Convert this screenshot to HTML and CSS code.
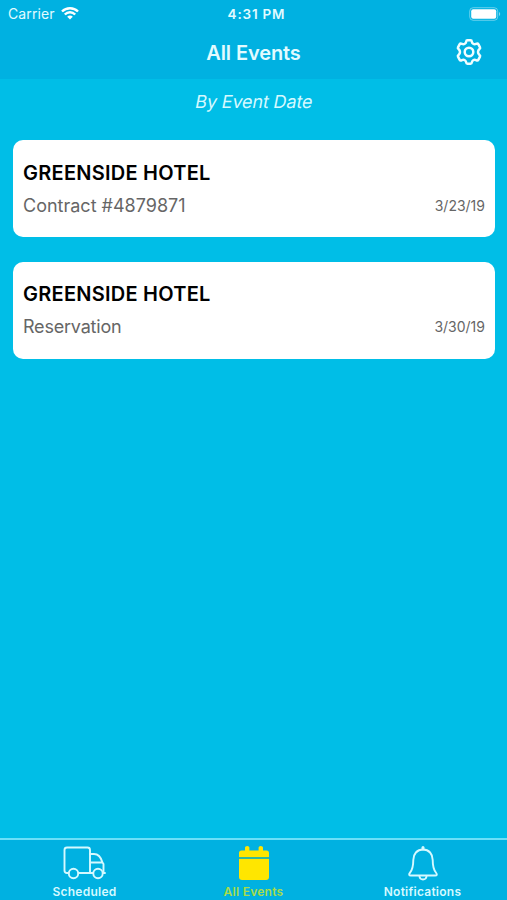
FILE: index.html
```
<!DOCTYPE html>
<html lang="en">

<head>
    <meta charset="UTF-8">
    <meta name="viewport" content="width=device-width, initial-scale=1.0">
    <title>All Events</title>
    <link rel="stylesheet" href="styles.css">
</head>

<body>
    <div class="app">
        <header class="header">
            <div class="status-bar">
                <div class="carrier">
                    <span>Carrier</span>
                    <svg width="18" height="14" viewBox="0 0 18 14" fill="none" stroke="currentColor" stroke-width="2.4">
                        <path d="M1 4.500C5.400.1 12.600.1 17 4.500" />
                        <path d="M3.800 7.500c3-3 7.400-3 10.400 0" />
                        <path d="M6.200 9.700c1.600-1.600 4-1.600 5.600 0L9 12.500z" fill="currentColor" stroke="none" />
                    </svg>
                </div>
                <div class="time">4:31 PM</div>
                <div class="battery">
                    <svg width="32" height="14" viewBox="0 0 32 14">
                        <rect x=".7" y=".7" width="28" height="12.6" rx="3.5" fill="none" stroke="#fff" stroke-opacity=".4" />
                        <rect x="2.2" y="2.2" width="25" height="9.6" rx="2" fill="#fff" />
                        <path d="M30 5c1.6.6 1.6 3.4 0 4z" fill="#fff" fill-opacity=".5" />
                    </svg>
                </div>
            </div>
            <div class="nav-bar">
                <h1>All Events</h1>
                <button class="settings" aria-label="Settings">
                    <svg width="28" height="28" viewBox="-14 -14 28 28" fill="none" stroke="currentColor" stroke-width="2.5" stroke-linejoin="round">
                        <path d="M-1.600-11.800H1.600Q2.700-11.800 2.800-10.500 2.900-9 4.200-8.200T7-8.100Q8.700-8.900 9.300-7.900L11-4.700Q11.500-3.700 10.500-2.900 9-1.700 9 0T10.500 2.900Q11.500 3.700 11 4.700L9.300 7.900Q8.700 8.900 7 8.100 5.500 7.400 4.200 8.200T2.800 10.500Q2.700 11.800 1.600 11.800H-1.600Q-2.700 11.800-2.800 10.500-2.900 9-4.200 8.200T-7 8.100Q-8.700 8.900-9.300 7.900L-11 4.700Q-11.500 3.700-10.500 2.900-9 1.700-9 0T-10.500-2.900Q-11.500-3.700-11-4.700L-9.300-7.900Q-8.700-8.900-7-8.100-5.500-7.400-4.200-8.200T-2.800-10.500Q-2.700-11.800-1.600-11.800z" />
                        <circle r="4.300" />
                    </svg>
                </button>
            </div>
        </header>

        <main class="content">
            <p class="sort-label">By Event Date</p>

            <div class="event">
                <h2>GREENSIDE HOTEL</h2>
                <div class="event-info">
                    <span class="contract">Contract #4879871</span>
                    <span class="date">3/23/19</span>
                </div>
            </div>

            <div class="event">
                <h2>GREENSIDE HOTEL</h2>
                <div class="event-info">
                    <span class="reservation">Reservation</span>
                    <span class="date">3/30/19</span>
                </div>
            </div>
        </main>

        <nav class="tab-bar">
            <a class="tab">
                <svg width="44" height="36" viewBox="0 0 44 36" fill="none" stroke="currentColor" stroke-width="1.9" stroke-linejoin="round" stroke-linecap="round">
                    <path d="M5.500 28H4Q1.500 28 1.500 25.500V5Q1.500 2.500 4 2.500H24.500Q27 2.500 27 5V28H15.500" />
                    <path d="M27 9h4c4.500 0 7.200 4 8.500 8.500L40.500 19v9h1.500M27 28h3M28 17.500h11" />
                    <circle cx="10.500" cy="28.500" r="4.700" />
                    <circle cx="35" cy="28.500" r="4.700" />
                </svg>
                <span class="scheduled">Scheduled</span>
            </a>
            <a class="tab active">
                <svg width="44" height="36" viewBox="0 0 44 36" fill="currentColor">
                    <path d="M7 12V8q0-2.500 2.500-2.500H13V2.500q0-1.500 2.200-1.500t2.200 1.500v3h9.200v-3q0-1.500 2.200-1.500t2.200 1.500v3h3.500Q37 5.500 37 8v4z" />
                    <path d="M7 14h30v18q0 3-3 3H10q-3 0-3-3z" />
                    <path d="M7 12h30v2H7z" fill="#32b99b" />
                </svg>
                <span class="all-events">All Events</span>
            </a>
            <a class="tab">
                <svg width="44" height="36" viewBox="0 0 44 36" fill="none" stroke="currentColor" stroke-width="1.9" stroke-linejoin="round" stroke-linecap="round">
                    <path d="M22 4.500c-6 0-9.700 4.500-9.700 10.500 0 8-1.300 10.500-3.500 13-1.200 1.400-.7 2.500 1 2.500h24.400c1.700 0 2.200-1.100 1-2.500-2.200-2.500-3.500-5-3.500-13 0-6-3.700-10.500-9.700-10.500z" />
                    <path d="M22 2.500v1.500" stroke-width="3" />
                    <path d="M18.500 31.500c.5 4 6.500 4 7 0" />
                </svg>
                <span class="notifications">Notifications</span>
            </a>
        </nav>
    </div>
</body>

</html>
```
FILE: styles.css
```
* {
    box-sizing: border-box;
}

body {
    font-family: Inter, "Liberation Sans", sans-serif;
    margin: 0;
    background-color: #00bee7;
    color: #fff;
}

h1, h2, p {
    margin: 0;
}

svg {
    display: block;
}

.app {
    display: flex;
    flex-direction: column;
    height: 900px;
}

.header {
    height: 79px;
    background-color: #00b1e1;
}

.status-bar {
    display: grid;
    grid-template-columns: 1fr auto 1fr;
    align-items: center;
    height: 27px;
    padding: 0 6px 0 8px;
    color: #e2fbff;
}

.carrier {
    display: flex;
    align-items: center;
    gap: 6px;
    font-size: 14px;
    letter-spacing: 0.1px;
}

.carrier svg {
    color: #fff;
}

.time {
    padding-left: 4px;
    font-size: 13.5px;
    font-weight: 600;
    letter-spacing: 0.8px;
}

.battery {
    justify-self: end;
}

.nav-bar {
    display: grid;
    grid-template-columns: 1fr auto 1fr;
    align-items: center;
    height: 50px;
    padding: 0 24px;
    color: #e2fbff;
}

h1 {
    grid-column: 2;
    padding-top: 1px;
    font-size: 20px;
    font-weight: 600;
    letter-spacing: -0.1px;
}

.settings {
    justify-self: end;
    padding: 0;
    border: none;
    background: none;
    color: #f0fdff;
}

.content {
    flex: 1;
    padding: 11px 12px 0 13px;
}

.sort-label {
    margin-bottom: 26px;
    font-size: 18px;
    letter-spacing: -0.15px;
    line-height: 24px;
    text-align: center;
    color: #d5f9ff;
    transform: skewX(-11deg);
}

.event {
    height: 97px;
    margin-bottom: 24.5px;
    padding: 19px 10px 0;
    background: white;
    border-radius: 10px;
}

.event + .event {
    padding-top: 18.500px;
}

.event h2 {
    font-size: 20px;
    font-weight: 600;
    letter-spacing: 0.25px;
    line-height: 28px;
    color: #000;
}

.event-info {
    display: flex;
    justify-content: space-between;
    align-items: center;
    margin-top: 6px;
    font-size: 18px;
    line-height: 26px;
    color: #666;
}

.reservation {
    letter-spacing: -0.2px;
}

.date {
    font-size: 14px;
}

.tab-bar {
    display: flex;
    height: 62px;
    padding-top: 5px;
    border-top: 2px solid #6be0f8;
    background-color: #00b1e1;
}

.tab {
    flex: 1;
    display: flex;
    flex-direction: column;
    align-items: center;
    gap: 3px;
    font-size: 12px;
    font-weight: 600;
    letter-spacing: 0.25px;
    line-height: 15px;
    color: #d5f9ff;
}

.tab.active {
    color: #ffe600;
}

.tab.active span {
    color: #a8dc48;
}
```
